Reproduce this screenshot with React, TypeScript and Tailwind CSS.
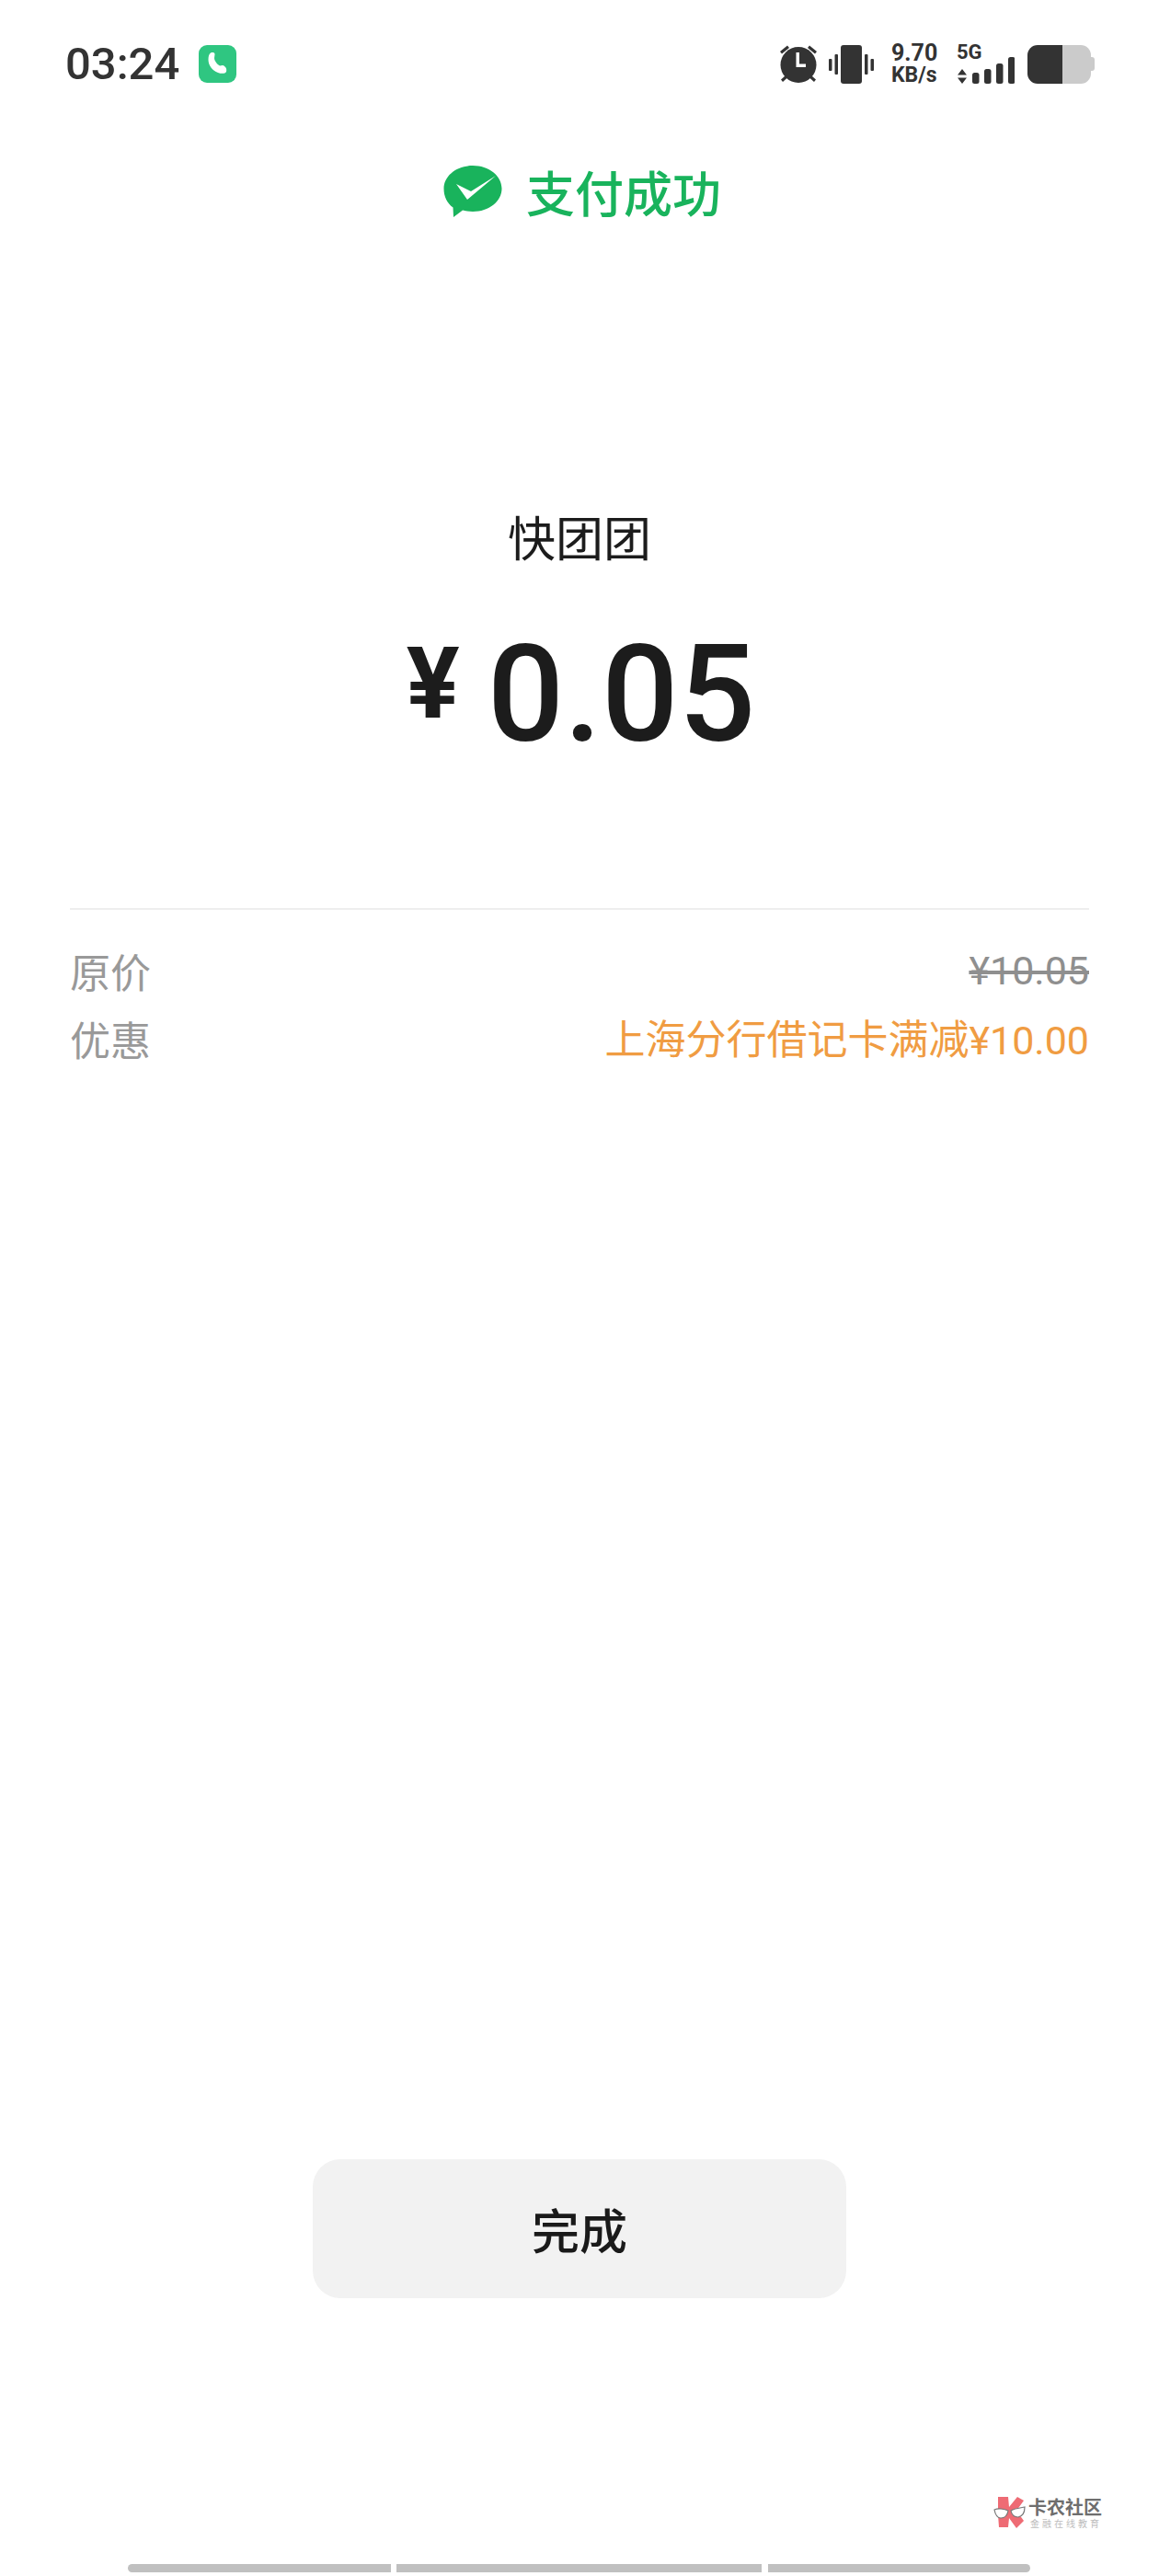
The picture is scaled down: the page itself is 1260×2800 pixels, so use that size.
import React from "react";

const cjk = { fontFamily: '"Noto Sans CJK SC", "Noto Sans", sans-serif' };

function Alarm() {
  return (
    <svg width="44" height="43" viewBox="0 0 44 43" fill="#333">
      <circle cx="22" cy="22.5" r="19.5" />
      <path d="M2 8 L10 1.5 L12 4 L4 10.5 Z M42 8 L34 1.5 L32 4 L40 10.5 Z" />
      <path d="M3 38.5 L8 34 L10 36.5 L5 41 Z M41 38.5 L36 34 L34 36.5 L39 41 Z" />
      <path d="M19.5 9 H23 V21.5 H30 V25 H19.5 Z" fill="#fff" />
    </svg>
  );
}

function Vibrate() {
  return (
    <svg width="49" height="42" viewBox="0 0 49 42" fill="#333">
      <rect x="13" y="0" width="23" height="42" rx="3" />
      <rect x="0" y="15" width="3.5" height="13" rx="1" />
      <rect x="6.5" y="10" width="3.5" height="22" rx="1" />
      <rect x="39" y="10" width="3.5" height="22" rx="1" />
      <rect x="45.5" y="15" width="3.5" height="13" rx="1" />
    </svg>
  );
}

function Signal() {
  return (
    <svg width="63" height="29" viewBox="0 0 63 29" fill="#333">
      <path d="M6 13 L11 19.5 H1 Z M6 29 L11 22.5 H1 Z" />
      <rect x="17" y="17" width="7.5" height="12" rx="2.5" />
      <rect x="30" y="13" width="7.5" height="16" rx="2.5" />
      <rect x="43" y="7" width="7.5" height="22" rx="2.5" />
      <rect x="56" y="0" width="7.5" height="29" rx="2.5" />
    </svg>
  );
}

function Battery() {
  return (
    <div className="flex items-center">
      <div className="flex h-[42px] w-[69px] overflow-hidden rounded-[11px]">
        <div className="w-[38px] bg-[#333333]" />
        <div className="flex-1 bg-[#cbcbcb]" />
      </div>
      <div className="h-[15px] w-[4px] rounded-r-[3px] bg-[#cbcbcb]" />
    </div>
  );
}

function WeChatLogo() {
  return (
    <svg width="64" height="58" viewBox="0 0 64 58" className="shrink-0">
      <path
        d="M32 1 C49.5 1 63.5 12 63.5 26 C63.5 40 49.5 51 32 51 C28 51 24.5 50.4 21 49.4 L11 57 L10.5 46.5 C4 42 0.5 34.5 0.5 26 C0.5 12 14.5 1 32 1 Z"
        fill="#19b35c"
      />
      <path d="M14 21 L30 29 L57 12 L26 38 Z" fill="#fff" />
    </svg>
  );
}

function PhoneBadge() {
  return (
    <div className="ml-[21px] h-[41px] w-[41px] rounded-[9px] bg-[#2fc681]">
      <svg width="41" height="41" viewBox="0 0 41 41" fill="#fff">
        <path d="M13 8.5 C15 7.5 17.5 8 17.5 10 L17 14 C17 17 20 21 23 22.5 L26 22 C29 22.5 31 26 30 29 C29 31 25 31.5 21 30 C15 28 10.5 22 10.5 16 C10.5 12.5 11 10 13 8.5 Z" />
      </svg>
    </div>
  );
}

function WatermarkLogo() {
  return (
    <svg width="36" height="36" viewBox="0 0 36 36">
      <path d="M5 1 H16 L17 12 L26 1 L33 5 L25 16 L33 27 L25 35 L17 24 L16 34 L6 34 L5 20 Z" fill="#ee6b74" />
      <path d="M1 15 C5 13 12 14 16 16 C15 22 12 24 8 24 C4 24 2 20 1 15 Z" fill="#fff" stroke="#777" strokeWidth="1.2" />
      <path d="M19 16 C24 13 30 13 34 12 C34 18 32 22 27 23 C23 23 20 21 19 16 Z" fill="#fff" stroke="#777" strokeWidth="1.2" />
    </svg>
  );
}

export default function App() {
  return (
    <div className="relative flex h-[2800px] w-[1260px] flex-col bg-white" style={cjk}>
      {/* Status bar */}
      <div className="flex items-center justify-between pl-[71px] pr-[70px] pt-[47px]" >
        <div className="flex items-center">
          <span className="font-['Roboto'] text-[49px] font-medium leading-[43px] text-[#333333]">03:24</span>
          <PhoneBadge />
        </div>
        <div className="flex items-center">
          <Alarm />
          <div className="ml-[11px]"><Vibrate /></div>
          <div className="ml-[19px] flex w-[52px] flex-col font-['Roboto'] font-bold text-[#333333]">
            <span className="text-[25px] leading-[22px]">9.70</span>
            <span className="mt-[3px] text-[23px] leading-[20px]">KB/s</span>
          </div>
          <div className="ml-[19px] flex w-[63px] flex-col font-['Roboto'] font-bold text-[#333333]">
            <span className="h-[13px] text-[22px] leading-[16px]">5G</span>
            <Signal />
          </div>
          <div className="ml-[14px]"><Battery /></div>
        </div>
      </div>

      {/* Result title */}
      <div className="mt-[87px] flex h-[58px] items-center justify-center pl-[6px]">
        <WeChatLogo />
        <span className="ml-[26px] text-[53px] font-medium leading-[58px] text-[#19b35c]">支付成功</span>
      </div>

      {/* Merchant + amount */}
      <div className="mt-[316px] text-center text-[52px] leading-[60px] text-[#1c1c1c]">快团团</div>
      <div className="mt-[72px] flex items-start justify-center pl-[3px] text-[#1c1c1c]">
        <span className="mt-[8px] font-['Roboto'] text-[108px] font-bold leading-[100px]">¥</span>
        <span className="ml-[30px] font-['Roboto'] text-[147px] font-medium leading-[140px]">0.05</span>
      </div>

      {/* Details */}
      <div className="mx-[76px] mt-[162px] border-t-2 border-[#eeeeee] pt-[30px]">
        <div className="flex items-center justify-between text-[44px] leading-[72px]">
          <span className="text-[#999999]">原价</span>
          <span className="font-['Roboto'] text-[43px] text-[#8f8f8f] line-through">¥10.05</span>
        </div>
        <div className="flex items-center justify-between text-[44px] leading-[72px]">
          <span className="text-[#999999]">优惠</span>
          <span className="text-[#f09c42]">
            上海分行借记卡满减<span className="font-['Roboto'] text-[43px]">¥10.00</span>
          </span>
        </div>
      </div>

      {/* Button */}
      <div className="mt-auto flex justify-center">
        <button className="h-[151px] w-[580px] rounded-[30px] bg-[#f2f2f2] text-[52px] font-medium text-[#1a1a1a]">完成</button>
      </div>

      {/* Gesture bar */}
      <div className="mt-[289px] mb-[4px] flex h-[9px] pl-[139px]">
        <div className="w-[286px] rounded-l-full bg-[#c0c0c0]" />
        <div className="ml-[6px] w-[397px] bg-[#c0c0c0]" />
        <div className="ml-[7px] w-[285px] rounded-r-full bg-[#c0c0c0]" />
      </div>

      {/* Watermark */}
      <div className="absolute left-[1080px] top-[2713px] flex items-start">
        <WatermarkLogo />
        <div className="ml-[2px] flex flex-col">
          <span className="text-[20px] font-bold leading-[24px] text-[#6e6e6e]">卡农社区</span>
          <span className="ml-[2px] whitespace-nowrap text-[10px] leading-[12px] tracking-[3px] text-[#bdbdbd]">金融在线教育</span>
        </div>
      </div>
    </div>
  );
}
